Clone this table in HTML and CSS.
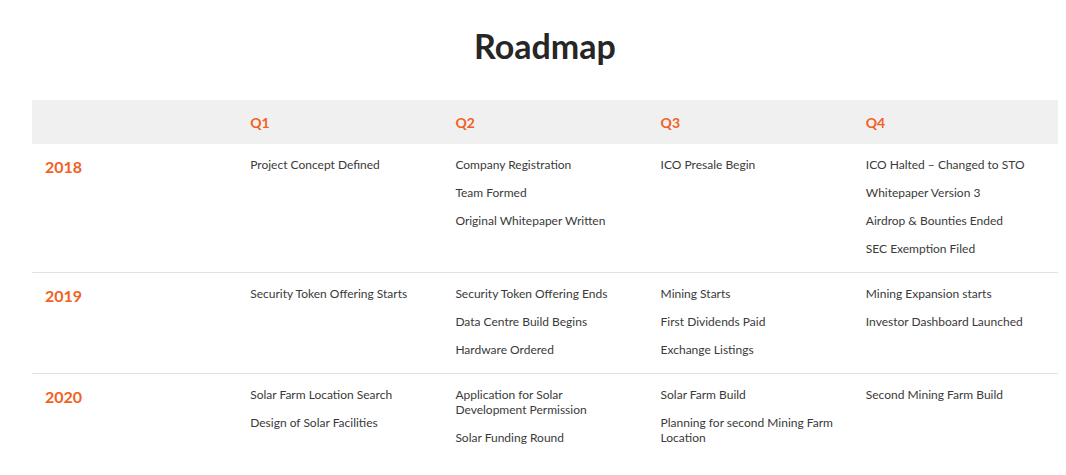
FILE: index.html
```html
<!DOCTYPE html>
<html lang="en">
<head>
<meta charset="utf-8">
<title>Roadmap</title>
<link rel="stylesheet" href="styles.css">
</head>
<body>
<section class="roadmap">
  <h1 class="title">Roadmap</h1>
  <div class="table">
    <div class="row head">
      <div class="cell"></div>
      <div class="cell q">Q1</div>
      <div class="cell q">Q2</div>
      <div class="cell q">Q3</div>
      <div class="cell q">Q4</div>
    </div>
    <div class="row">
      <div class="cell year">2018</div>
      <div class="cell"><p>Project Concept Defined</p></div>
      <div class="cell"><p>Company Registration</p><p>Team Formed</p><p>Original Whitepaper Written</p></div>
      <div class="cell"><p>ICO Presale Begin</p></div>
      <div class="cell"><p>ICO Halted – Changed to STO</p><p>Whitepaper Version 3</p><p>Airdrop &amp; Bounties Ended</p><p>SEC Exemption Filed</p></div>
    </div>
    <div class="row">
      <div class="cell year">2019</div>
      <div class="cell"><p>Security Token Offering Starts</p></div>
      <div class="cell"><p>Security Token Offering Ends</p><p>Data Centre Build Begins</p><p>Hardware Ordered</p></div>
      <div class="cell"><p>Mining Starts</p><p>First Dividends Paid</p><p>Exchange Listings</p></div>
      <div class="cell"><p>Mining Expansion starts</p><p>Investor Dashboard Launched</p></div>
    </div>
    <div class="row last">
      <div class="cell year">2020</div>
      <div class="cell"><p>Solar Farm Location Search</p><p>Design of Solar Facilities</p></div>
      <div class="cell"><p>Application for Solar Development Permission</p><p>Solar Funding Round</p></div>
      <div class="cell"><p>Solar Farm Build</p><p>Planning for second Mining Farm Location</p></div>
      <div class="cell"><p>Second Mining Farm Build</p></div>
    </div>
  </div>
</section>
</body>
</html>
```
FILE: styles.css
```css
html, body {
  margin: 0;
  padding: 0;
  background: #ffffff;
}
body {
  font-family: "Lato", "Open Sans", sans-serif;
  color: #3a3a3a;
}
.roadmap {
  padding: 0 8px 0 32px;
}
.title {
  margin: 0;
  height: 100px;
  box-sizing: border-box;
  padding-top: 27px;
  text-align: center;
  font-size: 34px;
  line-height: 38px;
  font-weight: 700;
  color: #262626;
}
.table {
  width: 1026px;
}
.row {
  display: grid;
  grid-template-columns: repeat(5, 1fr);
  padding: 13px 0 3px;
  border-bottom: 1px solid #e2e2e2;
}
.row.last {
  border-bottom: none;
}
.row.head {
  background: #f0f0f0;
  height: 44px;
  box-sizing: border-box;
  padding: 0;
  border: none;
  align-items: center;
}
.cell {
  padding: 0 17px 0 13px;
  font-size: 12px;
  line-height: 15px;
}
.cell p {
  margin: 0 0 13px;
}
.q {
  color: #f26122;
  font-weight: 700;
  font-size: 14px;
}
.year {
  color: #f26122;
  font-weight: 700;
  font-size: 16px;
  line-height: 18px;
  padding-top: 1px;
}
```
